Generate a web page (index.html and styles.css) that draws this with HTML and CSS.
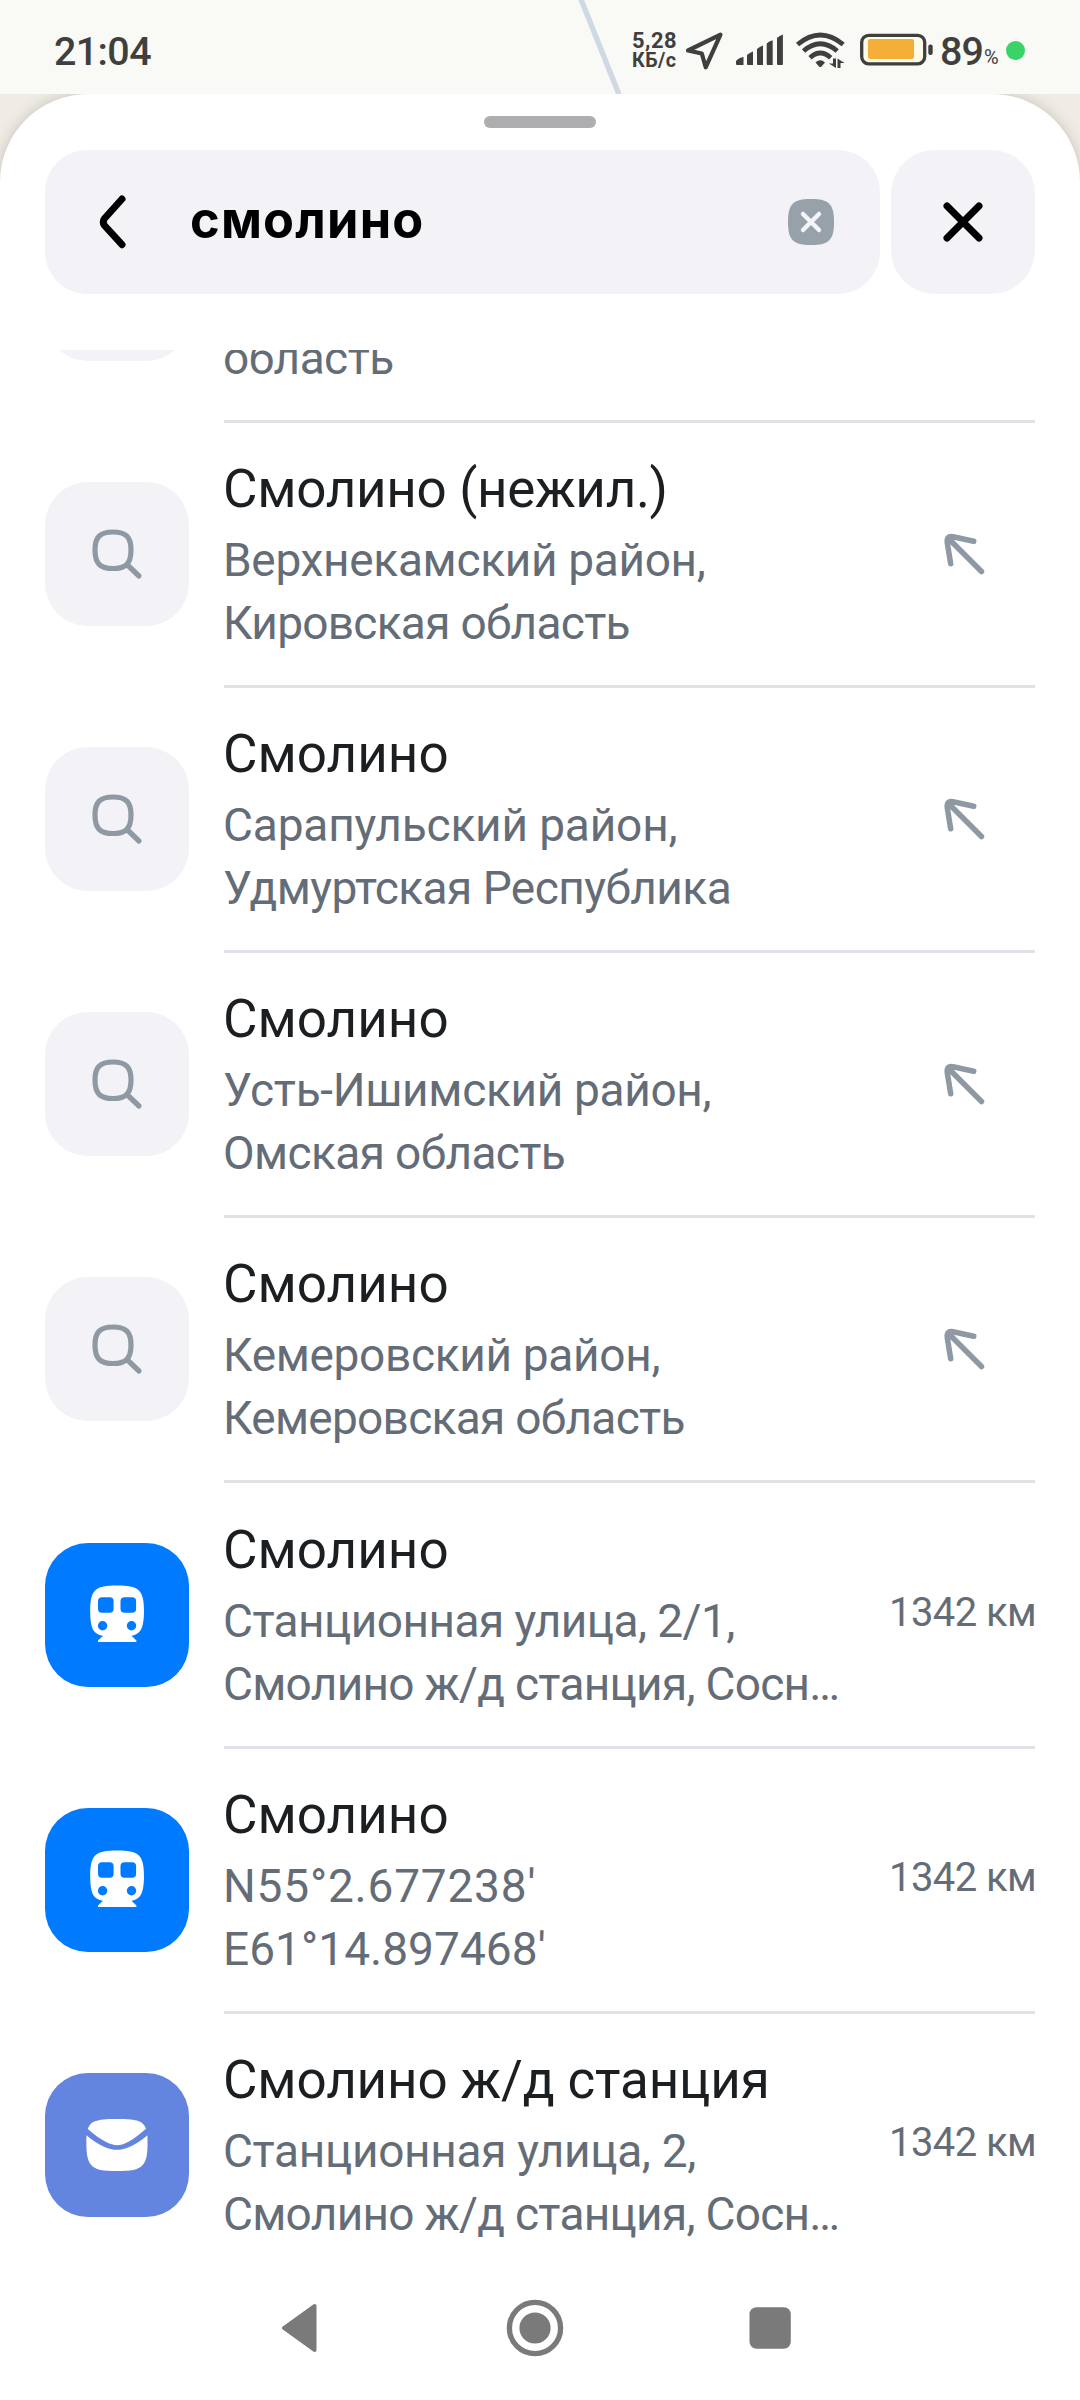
FILE: index.html
```
<!DOCTYPE html>
<html lang="ru">
<head>
<meta charset="utf-8">
<title>Поиск</title>
<link rel="stylesheet" href="styles.css">
</head>
<body>
<svg class="defs" aria-hidden="true">
  <symbol id="search" viewBox="0 0 144 144">
    <path d="M68 50C81 50 86 55 86 68C86 81.500 81 86.500 68 86.500C55 86.500 50 81.500 50 68C50 55 55 50 68 50ZM82.500 83L94 94" fill="none" stroke="#8f99a3" stroke-width="5.200" stroke-linecap="round"/>
  </symbol>
  <symbol id="arrow" viewBox="0 0 48 48">
    <path d="M11.700 33.700L8.300 13C7.600 8 9.500 5.800 14 6.700L34.700 11.300M9.500 8.500L42.500 41.500" fill="none" stroke="#8f99a3" stroke-width="5.500" stroke-linecap="round" stroke-linejoin="round"/>
  </symbol>
  <symbol id="train" viewBox="0 0 144 144">
    <path d="M72 42.400C93 42.400 99 46 99 68C99 86 95 91.500 86.500 92.700L91.400 97.500V99H53V97.500L58 92.700C49 91.500 45.200 86 45.200 68C45.200 46 51 42.400 72 42.400Z" fill="#fff"/>
    <g fill="#007aff"><rect x="53" y="54.300" width="15.600" height="15.500" rx="4"/><rect x="75.500" y="54.300" width="15.600" height="15.500" rx="4"/><circle cx="57.600" cy="82.700" r="4.700"/><circle cx="86.500" cy="82.700" r="4.700"/></g>
  </symbol>
  <symbol id="mail" viewBox="0 0 144 144">
    <path d="M42.800 56C45.500 48.500 50 46 72 46S98 48.500 101 55.700C88 67.500 78 72.300 72 72.300S56 67.500 42.800 56Z" fill="#fff"/>
    <path d="M41.500 62.200C54 73 64 76.800 72 76.800S90 73 102.400 62.200C103.600 94 99 98 72 98S40.400 94 41.500 62.200Z" fill="#fff"/>
  </symbol>
</svg>

<header class="status">
  <svg class="status-road" viewBox="0 0 60 94"><path d="M10.500 -2L50 97" stroke="#ced9e4" stroke-width="5.300"/></svg>
  <span class="clock">21:04</span>
  <div class="net"><span class="net-rate">5,28</span><span class="net-unit">КБ/с</span></div>
  <svg class="i-loc" viewBox="684 30 42 40"><path d="M720.500 34.700L688 50.500L701.800 53.500L705.700 67.300Z" fill="none" stroke="#3f3f3d" stroke-width="4.200" stroke-linejoin="round"/></svg>
  <svg class="i-signal" viewBox="735 30 50 40" fill="#3f3f3d"><path d="M736 61Q739 57.500 743.500 57V65H737Q736 65 736 64ZM747 55Q749.500 52.500 753 51.500V65H748Q747 65 747 64ZM757 49Q759.500 46.500 763 45.500V65H758Q757 65 757 64ZM766.700 43.500Q769 41 772.700 40.300V65H767.700Q766.700 65 766.700 64ZM777 38Q779.500 35.500 782.900 34.500V64Q782.900 65 782 65H778Q777 65 777 64Z"/></svg>
  <svg class="i-wifi" viewBox="795 30 52 40"><g fill="none" stroke="#3f3f3d" stroke-width="4.800"><path d="M797.500 44.500Q820.300 25.500 843.200 44.500"/><path d="M803.500 51Q820.300 36.500 837.200 51"/><path d="M810 57.700Q820.300 48.500 830.700 57.700"/></g><path d="M815.500 62.500Q820.300 58 825 62.500L821.500 66.500Q820.300 67.500 819 66.500ZM833 58.500H836V68L829 63.500H833ZM837.500 68V58.500L844.500 63H840.500V68Z" fill="#3f3f3d"/></svg>
  <svg class="i-battery" viewBox="859 30 74 40"><rect x="861.700" y="35.300" width="63" height="28.500" rx="7" fill="#fefbe9" stroke="#3f3f3d" stroke-width="3.300"/><rect x="868" y="39" width="46" height="20" rx="2" fill="#f5ae38"/><rect x="928.300" y="44.500" width="4.400" height="10.500" rx="2" fill="#3f3f3d"/></svg>
  <span class="charge">89</span><span class="percent">%</span>
  <i class="privacy-dot"></i>
</header>

<main class="stage">
  <section class="sheet">
    <div class="grip"></div>
    <div class="search-bar">
      <div class="field">
        <svg class="back" viewBox="0 0 36 60"><path d="M27 7L9.500 26.500Q7 30 9.500 33.500L27 52.700" fill="none" stroke="#000" stroke-width="7" stroke-linecap="round" stroke-linejoin="round"/></svg>
        <span class="query">смолино</span>
        <svg class="clear" viewBox="0 0 46 46"><path d="M23 0C41 0 46 5 46 23S41 46 23 46S0 41 0 23S5 0 23 0Z" fill="#97a1aa"/><path d="M15 15L31 31M31 15L15 31" stroke="#f4f5fa" stroke-width="4.500" stroke-linecap="round"/></svg>
      </div>
      <div class="close"><svg viewBox="0 0 40 40"><path d="M4 4L36 36M36 4L4 36" stroke="#000" stroke-width="7" stroke-linecap="round"/></svg></div>
    </div>

    <div class="results">
      <article class="row row-first">
        <div class="tile"></div>
        <div class="body"><div class="text"><div class="sub"><span class="k5">область</span></div></div></div>
      </article>
      <article class="row">
        <div class="tile"><svg><use href="#search"/></svg></div>
        <div class="body"><div class="text"><div class="title k3">Смолино (нежил.)</div><div class="sub"><span class="k3">Верхнекамский район,</span><span class="k7">Кировская область</span></div></div><svg class="arrow"><use href="#arrow"/></svg></div>
      </article>
      <article class="row">
        <div class="tile"><svg><use href="#search"/></svg></div>
        <div class="body"><div class="text"><div class="title">Смолино</div><div class="sub"><span class="k1">Сарапульский район,</span><span class="k5">Удмуртская Республика</span></div></div><svg class="arrow"><use href="#arrow"/></svg></div>
      </article>
      <article class="row">
        <div class="tile"><svg><use href="#search"/></svg></div>
        <div class="body"><div class="text"><div class="title">Смолино</div><div class="sub"><span class="k3">Усть-Ишимский район,</span><span class="k6">Омская область</span></div></div><svg class="arrow"><use href="#arrow"/></svg></div>
      </article>
      <article class="row">
        <div class="tile"><svg><use href="#search"/></svg></div>
        <div class="body"><div class="text"><div class="title">Смолино</div><div class="sub"><span class="k3">Кемеровский район,</span><span class="k7">Кемеровская область</span></div></div><svg class="arrow"><use href="#arrow"/></svg></div>
      </article>
      <article class="row">
        <div class="tile tile-rail"><svg><use href="#train"/></svg></div>
        <div class="body"><div class="text"><div class="title">Смолино</div><div class="sub"><span class="k5">Станционная улица, 2/1,</span><span class="k7">Смолино ж/д станция, Сосн…</span></div></div><div class="distance">1342 км</div></div>
      </article>
      <article class="row">
        <div class="tile tile-rail"><svg><use href="#train"/></svg></div>
        <div class="body"><div class="text"><div class="title">Смолино</div><div class="sub"><span class="wide-n">N55°2.677238'</span><span class="wide-e">E61°14.897468'</span></div></div><div class="distance">1342 км</div></div>
      </article>
      <article class="row row-last">
        <div class="tile tile-post"><svg><use href="#mail"/></svg></div>
        <div class="body"><div class="text"><div class="title k1">Смолино ж/д станция</div><div class="sub"><span class="k3">Станционная улица, 2,</span><span class="k7">Смолино ж/д станция, Сосн…</span></div></div><div class="distance">1342 км</div></div>
      </article>
    </div>
  </section>
</main>

<nav class="nav">
  <svg viewBox="0 0 60 60"><path d="M44.500 8L44.500 52L14 30Z" fill="#7a7a7a" stroke="#7a7a7a" stroke-width="4" stroke-linejoin="round"/></svg>
  <svg viewBox="0 0 60 60"><circle cx="30" cy="30" r="25.600" fill="none" stroke="#7a7a7a" stroke-width="5.300"/><circle cx="30" cy="30" r="15.600" fill="#7a7a7a"/></svg>
  <svg viewBox="0 0 60 60"><rect x="9.500" y="9.300" width="41.300" height="41.400" rx="7" fill="#7a7a7a"/></svg>
</nav>
</body>
</html>
```
FILE: styles.css
```
* { box-sizing: border-box; }

body {
  margin: 0;
  width: 1080px;
  height: 2400px;
  overflow: hidden;
  display: flex;
  flex-direction: column;
  background: #fff;
  font-family: Roboto, "Noto Sans", sans-serif;
}

svg { display: block; flex: none; }
.defs { display: none; }

/* Status bar */
.status {
  position: relative;
  flex: none;
  height: 94px;
  padding: 6px 55px 0 54px;
  display: flex;
  align-items: center;
  background: #f9f9f5;
  color: #3f3f3d;
  white-space: nowrap;
}
.status-road { position: absolute; left: 570px; top: 0; width: 60px; height: 94px; }
.clock { margin-right: auto; padding-top: 3px; font-size: 39.4px; font-weight: 500; letter-spacing: -.6px; }
.net { width: 44px; display: flex; flex-direction: column; font-weight: 700; line-height: 20px; letter-spacing: .5px; padding-top: 1px; }
.net-rate { font-size: 21.9px; }
.net-unit { font-size: 19.7px; }
.i-loc { width: 42px; height: 40px; margin-left: 8px; }
.i-signal { width: 50px; height: 40px; margin-left: 9px; }
.i-wifi { width: 52px; height: 40px; margin-left: 10px; }
.i-battery { width: 74px; height: 40px; margin-left: 12px; }
.charge { width: 44px; margin-left: 7px; padding-top: 3px; font-size: 39.4px; font-weight: 500; letter-spacing: -1px; }
.percent { width: 22px; padding-top: 13px; font-size: 20px; }
.privacy-dot { width: 19px; height: 19px; border-radius: 50%; background: #38d468; }

/* Bottom sheet */
.stage { flex: 1; min-height: 0; background: #efece5; overflow: hidden; }
.sheet {
  height: 100%;
  display: flex;
  flex-direction: column;
  background: #fff;
  border-radius: 88px 88px 0 0;
  box-shadow: 0 0 14px rgba(60, 50, 30, .22);
}
.grip { flex: none; width: 112px; height: 12px; margin: 22px auto 22px; border-radius: 6px; background: #aeaeb0; }

.search-bar { flex: none; display: flex; gap: 11px; height: 144px; padding: 0 45px; }
.field { flex: 1; display: flex; align-items: center; padding: 0 46px 0 50px; border-radius: 42px; background: #f2f2f7; }
.back { width: 36px; height: 60px; }
.query { margin-left: 59px; margin-right: auto; padding-bottom: 5px; font: 700 50.5px Inter, sans-serif; letter-spacing: 1.2px; color: #000; }
.clear { width: 46px; height: 46px; }
.close { width: 144px; border-radius: 44px; background: #f2f2f7; display: flex; align-items: center; justify-content: center; }
.close svg { width: 40px; height: 40px; }

/* Results */
.results { flex: 1; min-height: 0; margin-top: 56px; padding: 0 45px; overflow: hidden; }
.row { display: flex; align-items: center; gap: 35px; height: 265.2px; }
.row-first { margin-top: -192.5px; }
.tile { flex: none; width: 144px; height: 144px; margin-bottom: 3px; border-radius: 43px; background: #f2f2f7; }
.tile svg { width: 144px; height: 144px; }
.tile-rail { background: #007aff; }
.tile-post { background: #6385e0; }
.body { flex: 1; align-self: stretch; display: flex; align-items: center; border-bottom: 3px solid #dfe2e7; }
.row-last .body { border-bottom-color: transparent; }
.text { flex: 1; align-self: stretch; display: flex; flex-direction: column; justify-content: flex-end; gap: 8px; margin-left: -1px; padding-bottom: 30px; white-space: nowrap; }
.title { font-size: 53px; line-height: 63px; color: #1c1f22; }
.sub { display: flex; flex-direction: column; font-size: 46px; line-height: 63px; color: #646d77; }
.arrow { width: 48px; height: 48px; margin-right: 48px; }
.distance { flex: none; margin-right: -1px; padding-bottom: 5px; font-size: 40px; letter-spacing: -.6px; color: #646d77; }

/* Tracking steps */
.k1 { letter-spacing: -.16px; }
.k3 { letter-spacing: -.32px; }
.k5 { letter-spacing: -.55px; }
.k6 { letter-spacing: -.62px; }
.k7 { letter-spacing: -.72px; }
.wide-n { letter-spacing: .8px; }
.wide-e { letter-spacing: .05px; }

/* System navigation */
.nav { flex: none; height: 144px; padding: 0 280px 0 270px; display: flex; align-items: center; justify-content: space-between; }
.nav svg { width: 60px; height: 60px; }
```
